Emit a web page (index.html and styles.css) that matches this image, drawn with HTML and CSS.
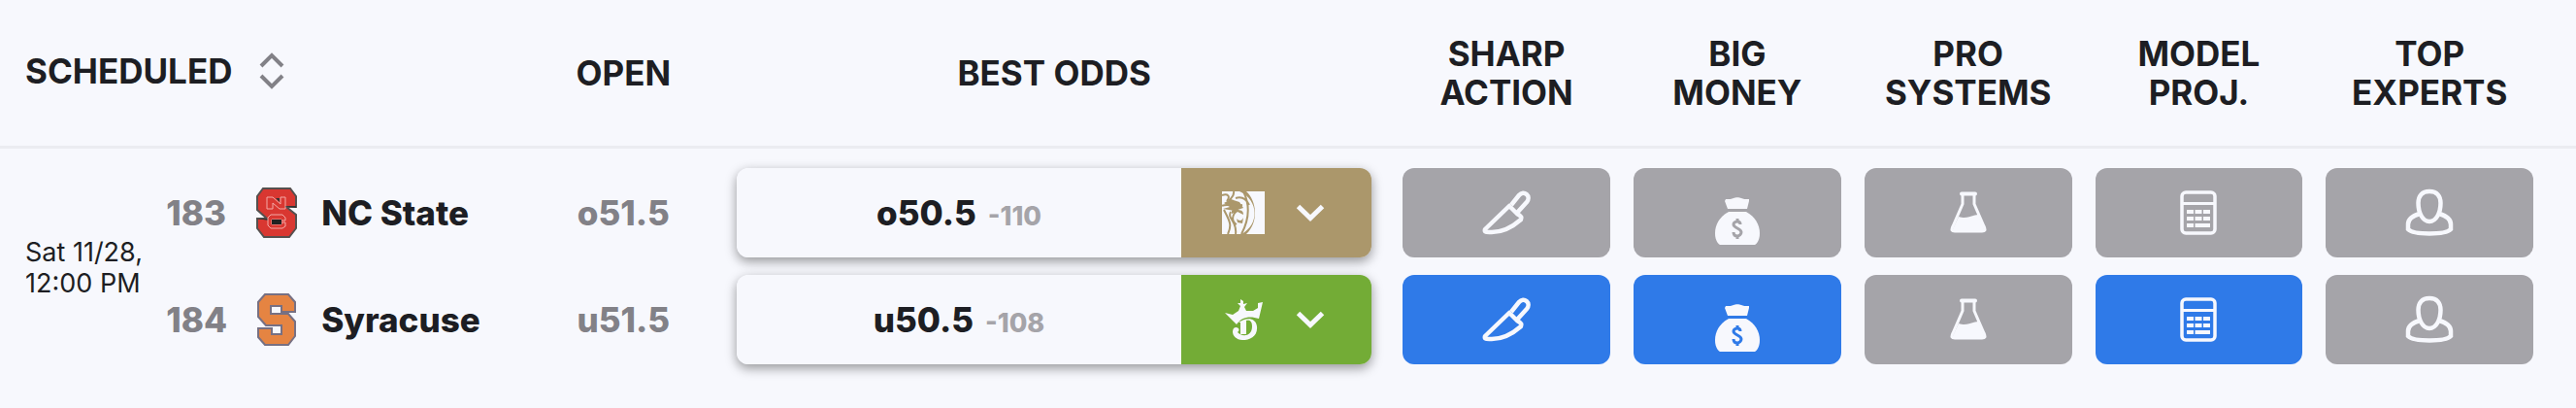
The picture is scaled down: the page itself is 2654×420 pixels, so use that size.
FILE: index.html
```html
<!DOCTYPE html>
<html lang="en">
<head>
  <meta charset="UTF-8">
  <meta name="viewport" content="width=device-width, initial-scale=1.0">
  <title>College Football Odds</title>
  <link rel="stylesheet" href="styles.css">
</head>
<body>
  <!-- shared icons -->
  <svg class="sprite" width="0" height="0" aria-hidden="true">
    <symbol id="icon-chevron" viewBox="0 0 30 18">
      <path d="M2.500 2.500 15 14.500 27.500 2.500" fill="none" stroke="currentColor" stroke-width="5"/>
    </symbol>
    <symbol id="icon-knife" viewBox="0 0 50 46">
      <g fill="none" stroke="currentColor" stroke-width="4.500" stroke-linejoin="round">
        <path d="M30 15 38 5C43 -1 51 6 46 12L36 23"/>
        <path d="M28 16 3 40C2 43 4 43 10 43C22 43 32 37 40 30C41 28 41 27 36 24Z"/>
      </g>
    </symbol>
    <symbol id="icon-money" viewBox="0 0 48 50">
      <path d="M12 2C16 2 18 2 20 1C22 0 26 0 28 1C30 2 32 2 36 2V4L34 12H14L11 4Z" fill="currentColor"/>
      <path d="M15 15H33C42 20 47 28 47 37C47 43 45 47 42 49H6C3 47 1 43 1 37C1 28 6 20 15 15Z" fill="currentColor"/>
      <path class="cutout" d="M27 28C27 26 26 25 24 25C21 25 20 27 20 28C20 32 28 32 28 36C28 38 26 40 24 40C21 40 20 38 20 36M24 22V25M24 40V43" fill="none" stroke-width="3"/>
    </symbol>
    <symbol id="icon-flask" viewBox="0 0 38 44">
      <path d="M13 3V13L3 36C1 40 2 41 5 41H33C36 41 37 40 35 36L25 13V3" fill="none" stroke="currentColor" stroke-width="3"/>
      <path d="M12 2.500H26" stroke="currentColor" stroke-width="4" stroke-linecap="round"/>
      <path d="M9 26C17 29 21 25 29 24L36 41H2Z" fill="currentColor"/>
    </symbol>
    <symbol id="icon-calc" viewBox="0 0 38 46">
      <rect x="2" y="2" width="34" height="42" rx="4" fill="none" stroke="currentColor" stroke-width="3.500"/>
      <path d="M2 13.500H36" stroke="currentColor" stroke-width="3"/>
      <path d="M7 22H14M15.500 22H22.500M24 22H31M7 29H14M15.500 29H22.500M24 29H31M7 36H14M15.500 36H31" stroke="currentColor" stroke-width="4"/>
    </symbol>
    <symbol id="icon-expert" viewBox="0 0 50 50">
      <g fill="none" stroke="currentColor" stroke-width="4.500">
        <path d="M25 3C17 3 13.500 8 13.500 15C13.500 25 18 34 25 34C32 34 36.500 25 36.500 15C36.500 8 33 3 25 3Z"/>
        <path d="M15 26C8 28 3 32 3 37V42C9 48 41 48 47 42V37C47 32 42 28 35 26"/>
      </g>
    </symbol>
  </svg>

  <table class="odds-table">
    <colgroup>
      <col class="col-game">
      <col class="col-team">
      <col class="col-open">
      <col class="col-best">
      <col class="col-signal">
      <col class="col-signal">
      <col class="col-signal">
      <col class="col-signal">
      <col class="col-signal">
      <col class="col-end">
    </colgroup>
    <thead>
      <tr>
        <th class="scheduled" colspan="2">
          <button type="button" class="sort">Scheduled
            <svg width="26" height="38" viewBox="0 0 26 38" aria-hidden="true">
              <path d="M2 14 13 3 24 14M2 24 13 35 24 24" fill="none" stroke="currentColor" stroke-width="4"/>
            </svg>
          </button>
        </th>
        <th>Open</th>
        <th class="best">Best Odds</th>
        <th>Sharp<br>Action</th>
        <th>Big<br>Money</th>
        <th>Pro<br>Systems</th>
        <th>Model<br>Proj.</th>
        <th>Top<br>Experts</th>
        <th></th>
      </tr>
    </thead>
    <tbody>
      <tr>
        <td class="time" rowspan="2">Sat 11/28,<br>12:00 PM</td>
        <td>
          <div class="team">
            <span class="rotation">183</span>
            <svg width="44" height="54" viewBox="0 0 44 54" role="img" aria-label="NC State">
              <path d="M8 2H36L42 10V21H32L42 29V43L35 52H9L2 43V33H12L2 24V10Z" fill="#d93731" stroke="#55504f" stroke-width="2"/>
              <path d="M12 23V11H18L26 18V11H31V23H25L18 17V23Z" fill="#d93731" stroke="#f3aaa7" stroke-width="1"/>
              <path d="M21 12H25V16ZM2 33H14V35ZM30 20H42V22Z" fill="#333"/>
              <path d="M16 29H28L31 32V35H27V34H17V39H27V37H31V41L28 43H16L13 40V32Z" fill="#d93731" stroke="#f3aaa7" stroke-width="1"/>
              <path d="M17 34H27V39H17Z" fill="#222"/>
            </svg>
            <span class="name">NC State</span>
          </div>
        </td>
        <td class="open">o51.5</td>
        <td class="best">
          <div class="odds">
            <div class="line">o50.5 <small>-110</small></div>
            <button type="button" class="book mgm" aria-label="BetMGM">
              <svg width="44" height="44" viewBox="0 0 44 44">
                <path d="M0 0H44V44H0Z" fill="#f7f8fd"/>
                <path d="M18 0C38 9 39 34 20 44L25 44C38 32 36 10 25 0Z" fill="#ab976b"/>
                <g fill="none" stroke="#ab976b" stroke-width="2">
                  <path d="M0 4C6 2 9 5 5 10M12 0C13 5 9 7 7 10M14 7C20 5 25 8 28 14M0 15C5 12 10 16 21 14M2 19C7 29 11 34 6 44M9 21C5 29 16 30 14 44M17 19C9 24 10 31 15 34M22 0C29 14 28 29 20 44"/>
                </g>
                <path d="M2 12 9 8 18 11 22 17 13 20 1 18 8 16ZM15 28C19 32 21 29 22 27L21 33 16 32ZM10 19C17 19 22 18 22 24L16 21 10 23Z" fill="#ab976b"/>
              </svg>
              <svg width="30" height="18"><use href="#icon-chevron"/></svg>
            </button>
          </div>
        </td>
        <td><button type="button" class="signal" aria-label="Sharp action"><svg width="50" height="46"><use href="#icon-knife"/></svg></button></td>
        <td><button type="button" class="signal money" aria-label="Big money"><svg width="48" height="50"><use href="#icon-money"/></svg></button></td>
        <td><button type="button" class="signal" aria-label="Pro systems"><svg width="38" height="44"><use href="#icon-flask"/></svg></button></td>
        <td><button type="button" class="signal" aria-label="Model projection"><svg width="38" height="46"><use href="#icon-calc"/></svg></button></td>
        <td><button type="button" class="signal" aria-label="Top experts"><svg width="50" height="50"><use href="#icon-expert"/></svg></button></td>
        <td></td>
      </tr>
      <tr>
        <td>
          <div class="team">
            <span class="rotation">184</span>
            <svg width="44" height="54" viewBox="0 0 44 54" role="img" aria-label="Syracuse">
              <path d="M10 1H34L41 9V19H27V13H16V21H34L41 29V44L34 53H10L3 45V36H17V42H27V33H11L3 24V9Z" fill="#e58442" stroke="#777083" stroke-width="2"/>
            </svg>
            <span class="name">Syracuse</span>
          </div>
        </td>
        <td class="open">u51.5</td>
        <td class="best">
          <div class="odds">
            <div class="line">u50.5 <small>-108</small></div>
            <button type="button" class="book dk" aria-label="DraftKings">
              <svg width="44" height="44" viewBox="0 0 44 44" fill="currentColor">
                <path d="M3 15 11 17 17 13 19 8 16 5 19 5V1L22 3V6L26 5 23 9 25 13 32 13 37 10 37 5 42 4 38 21C29 18 20 19 15 27Z"/>
                <path d="M17 25C25 19 35 20 36 29C37 39 29 43 21 43C13 43 9 36 12 31C15 28 20 32 16 35C20 40 31 40 31 29C31 23 28 22 25 23V37H19V25Z"/>
              </svg>
              <svg width="30" height="18"><use href="#icon-chevron"/></svg>
            </button>
          </div>
        </td>
        <td><button type="button" class="signal active" aria-label="Sharp action"><svg width="50" height="46"><use href="#icon-knife"/></svg></button></td>
        <td><button type="button" class="signal money active" aria-label="Big money"><svg width="48" height="50"><use href="#icon-money"/></svg></button></td>
        <td><button type="button" class="signal" aria-label="Pro systems"><svg width="38" height="44"><use href="#icon-flask"/></svg></button></td>
        <td><button type="button" class="signal active" aria-label="Model projection"><svg width="38" height="46"><use href="#icon-calc"/></svg></button></td>
        <td><button type="button" class="signal" aria-label="Top experts"><svg width="50" height="50"><use href="#icon-expert"/></svg></button></td>
        <td></td>
      </tr>
    </tbody>
  </table>
</body>
</html>
```

FILE: styles.css
```css
body {
  margin: 0;
  padding-bottom: 44px;
  background: #f7f8fd;
  color: #1d1e23;
  font-family: Inter, "Liberation Sans", sans-serif;
  font-size: 35px;
}
.sprite {
  position: absolute;
}
svg {
  display: block;
  flex: none;
}
button {
  font: inherit;
  color: #f7f8fd;
  border: none;
  padding: 0;
  cursor: pointer;
}

.odds-table {
  width: 100%;
  table-layout: fixed;
  border-collapse: separate;
  border-spacing: 0;
}
.col-game { width: 6%; }
.col-open { width: 7.9%; }
.col-best { width: 25.85%; }
.col-signal { width: 8.96%; }
.col-end { width: 1.2%; }

th {
  height: 150px;
  padding: 0;
  border-bottom: 3px solid #ebecf1;
  font-weight: 700;
  line-height: 40px;
  text-align: center;
  text-transform: uppercase;
}
td {
  padding: 18px 12px 0;
  text-align: center;
}
tbody tr:first-child td {
  padding-top: 20px;
}
th.best, td.best {
  padding-right: 20px;
  padding-left: 12px;
}

th.scheduled {
  height: 146px;
  padding-bottom: 4px;
  padding-left: 26px;
  text-align: left;
}
.sort {
  display: flex;
  align-items: center;
  gap: 28px;
  background: none;
  color: #1d1e23;
  text-transform: uppercase;
}
.sort svg {
  color: #828187;
}

tbody tr:first-child td.time {
  padding: 24px 0 0 26px;
  font-size: 27px;
  line-height: 32px;
  text-align: left;
  white-space: nowrap;
}
.team {
  display: flex;
  align-items: center;
  gap: 24px;
  font-weight: 800;
  white-space: nowrap;
}
.rotation {
  min-width: 68px;
  text-align: left;
}
.rotation, .open {
  color: #828187;
}
.open {
  padding-right: 0;
  padding-left: 0;
  font-weight: 800;
}

.odds {
  display: flex;
  height: 92px;
  border-radius: 12px;
  box-shadow: 0 4px 12px rgba(0, 0, 0, 0.4);
  overflow: hidden;
}
.line {
  flex: 1;
  display: flex;
  align-items: baseline;
  justify-content: center;
  gap: 12px;
  background: #f7f8fd;
  font-weight: 800;
  line-height: 92px;
}
.line small {
  color: #a5a4a9;
  font-size: 27px;
}
.book {
  width: 30%;
  display: flex;
  align-items: center;
  justify-content: center;
  gap: 32px;
  padding-right: 6px;
}
.mgm { background: #ab976b; }
.dk { background: #73ac36; }

.signal {
  --cutout: #a5a4a9;
  width: 100%;
  height: 92px;
  display: flex;
  align-items: center;
  justify-content: center;
  border-radius: 12px;
  background: var(--cutout);
}
.signal.active {
  --cutout: #2f7ae8;
}
.signal.money {
  align-items: flex-end;
  padding-bottom: 12px;
}
.cutout {
  stroke: var(--cutout);
}
```
